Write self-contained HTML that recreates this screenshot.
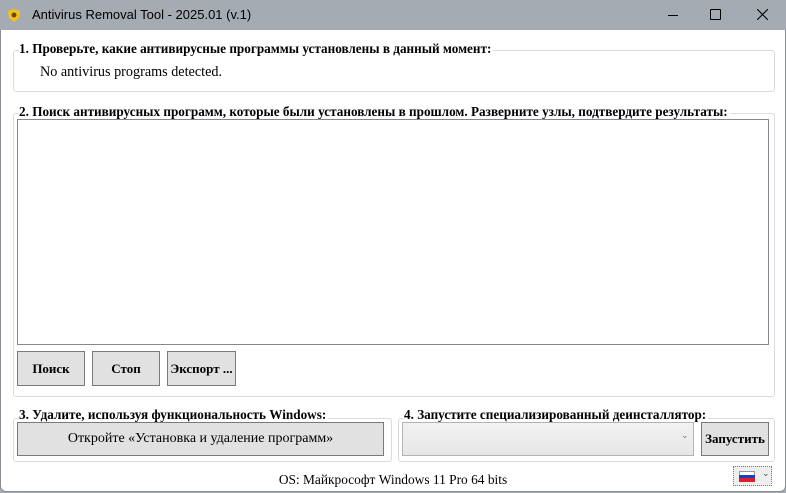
<!DOCTYPE html><html><head><meta charset="utf-8"><style>
body{margin:0;width:786px;height:493px;overflow:hidden;background:#a5abb3;font-family:"Liberation Serif","DejaVu Serif",serif;position:relative}
.a{position:absolute}
.win{left:0;top:30px;width:784px;height:461px;background:#fff;border:1px solid #8a8f96;border-top:none;border-radius:0 0 6px 6px}
.title{left:32px;top:7px;font:13px "Liberation Sans",sans-serif;color:#000}
.grp{border:1px solid #dcdcdc;border-radius:3px}
.lbl{font-weight:bold;font-size:13.2px;background:#fff;padding-right:2px;white-space:nowrap;line-height:14px}
.btn{background:#e1e1e1;border:1px solid #7a7a7a;box-sizing:border-box;font-weight:bold;font-size:13px;display:flex;align-items:center;justify-content:center;white-space:nowrap}
</style></head><body>
<svg class="a" style="left:7px;top:8px" width="14" height="15"><path d="M7 1 L13 3 L12 10 L7 14 L2 10 L1 3Z" fill="#f2c21b"/><circle cx="7" cy="7" r="2.5" fill="#6b4a10"/></svg>
<div class="a title">Antivirus Removal Tool - 2025.01 (v.1)</div>
<div class="a" style="left:668px;top:15px;width:10px;height:1px;background:#000"></div>
<div class="a" style="left:710px;top:9px;width:9px;height:9px;border:1px solid #000;border-radius:1px"></div>
<svg class="a" style="left:757px;top:9px" width="11" height="11"><path d="M0 0L11 11M11 0L0 11" stroke="#000" stroke-width="1.1"/></svg>
<div class="a win"></div>
<div class="a grp" style="left:13px;top:50px;width:760px;height:40px"></div>
<div class="a lbl" style="left:19px;top:42px">1. Проверьте, какие антивирусные программы установлены в данный момент:</div>
<div class="a" style="left:40px;top:64px;font-size:14.2px">No antivirus programs detected.</div>
<div class="a grp" style="left:13px;top:113px;width:760px;height:282px"></div>
<div class="a lbl" style="left:19px;top:105px">2. Поиск антивирусных программ, которые были установлены в прошлом. Разверните узлы, подтвердите результаты:</div>
<div class="a" style="left:17px;top:119px;width:750px;height:224px;border:1px solid #828790;background:#fff"></div>
<div class="a btn" style="left:17px;top:351px;width:68px;height:35px">Поиск</div>
<div class="a btn" style="left:92px;top:351px;width:68px;height:35px">Стоп</div>
<div class="a btn" style="left:167px;top:351px;width:69px;height:35px">Экспорт ...</div>
<div class="a grp" style="left:13px;top:418px;width:377px;height:42px"></div>
<div class="a lbl" style="left:19px;top:408px">3. Удалите, используя функциональность Windows:</div>
<div class="a btn" style="left:17px;top:422px;width:367px;height:34px;font-weight:normal;font-size:14px">Откройте «Установка и удаление программ»</div>
<div class="a grp" style="left:398px;top:418px;width:375px;height:42px"></div>
<div class="a lbl" style="left:404px;top:408px">4. Запустите специализированный деинсталлятор:</div>
<div class="a" style="left:402px;top:422px;width:290px;height:32px;border:1px solid #b4b4b4;background:linear-gradient(#f2f2f2,#e6e6e6)"></div>
<div class="a" style="left:681px;top:430px;font-size:9px;color:#777">⌄</div>
<div class="a btn" style="left:701px;top:422px;width:68px;height:34px">Запустить</div>
<div class="a" style="left:0;width:786px;top:472px;text-align:center;font-size:13.4px">OS: Майкрософт Windows 11 Pro 64 bits</div>
<div class="a" style="left:733px;top:466px;width:39px;height:20px;border:1px dotted #777;box-sizing:border-box;background:#eee"></div>
<div class="a" style="left:739px;top:471px;width:14px;height:3px;background:#fff;border:1px solid #999;border-bottom:none"></div>
<div class="a" style="left:739px;top:475px;width:16px;height:3px;background:#1c3fbf"></div>
<div class="a" style="left:739px;top:478px;width:16px;height:4px;background:#d8222a"></div>
<div class="a" style="left:762px;top:468px;font-size:9px;color:#555">⌄</div>
</body></html>
